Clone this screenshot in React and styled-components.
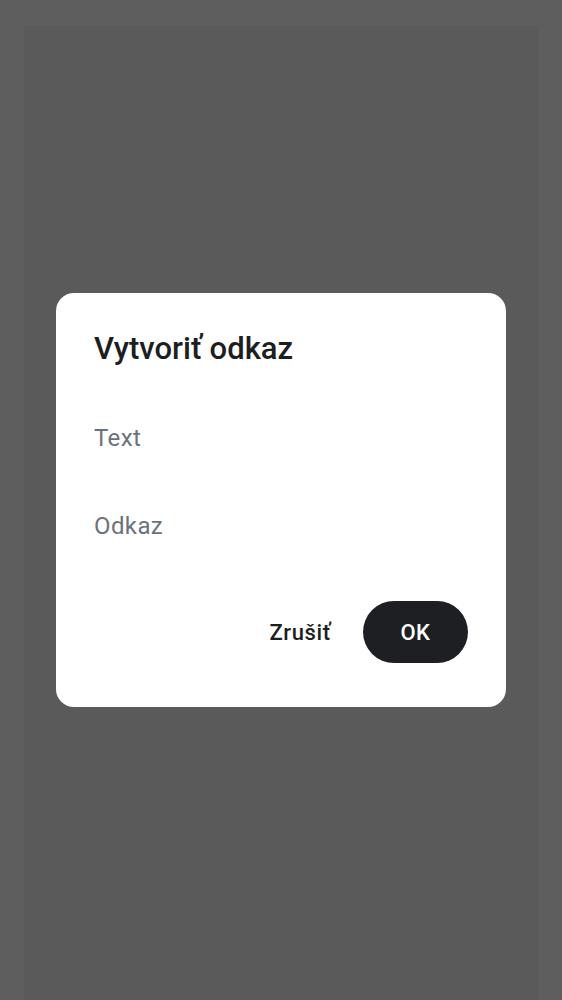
import { createGlobalStyle, styled } from "styled-components";

const GlobalStyle = createGlobalStyle`
  html, body {
    margin: 0;
    padding: 0;
    height: 100%;
    background: #5e5e5e;
  }
  #root {
    height: 100%;
  }
  * {
    box-sizing: border-box;
  }
`;

export default function App() {
  return (
    <>
      <GlobalStyle />
      <Screen>
        <Backdrop>
          <Dialog>
            <Title>Vytvoriť odkaz</Title>
            <Fields>
              <Field placeholder="Text" />
              <Field placeholder="Odkaz" />
            </Fields>
            <Actions>
              <TextButton>Zrušiť</TextButton>
              <FilledButton>OK</FilledButton>
            </Actions>
          </Dialog>
        </Backdrop>
      </Screen>
    </>
  );
}

const Screen = styled.div`
  height: 1000px;
  padding: 26px 24px 0;
  background: #5e5e5e;
  display: flex;
`;

const Backdrop = styled.div`
  flex: 1;
  background: #5a5a5a;
  display: flex;
  justify-content: center;
  padding-top: 267px;
  align-items: flex-start;
`;

const Dialog = styled.div`
  width: 450px;
  background: #ffffff;
  border-radius: 18px;
  padding: 31px 38px 44px;
  font-family: Roboto, "Noto Sans", sans-serif;
`;

const Title = styled.h2`
  margin: 0;
  font-size: 31px;
  font-weight: 500;
  line-height: 50px;
  color: #1d1e22;
`;

const Fields = styled.div`
  display: flex;
  flex-direction: column;
  margin-top: 20px;
`;

const Field = styled.input`
  border: none;
  outline: none;
  padding: 0;
  height: 88px;
  font-family: inherit;
  font-size: 24px;
  letter-spacing: 0.4px;
  color: #1d1e22;
  background: transparent;
  &::placeholder {
    color: #6b727d;
  }
`;

const Actions = styled.div`
  display: flex;
  justify-content: flex-end;
  align-items: center;
  gap: 32px;
  margin-top: 31px;
`;

const TextButton = styled.button`
  border: none;
  background: transparent;
  padding: 0;
  font-family: inherit;
  font-size: 22px;
  font-weight: 500;
  letter-spacing: 0.6px;
  color: #1d1e22;
`;

const FilledButton = styled.button`
  border: none;
  width: 105px;
  height: 62px;
  border-radius: 31px;
  background: #1e1f23;
  color: #ffffff;
  font-family: inherit;
  font-size: 22px;
  font-weight: 500;
  letter-spacing: 0.4px;
`;
